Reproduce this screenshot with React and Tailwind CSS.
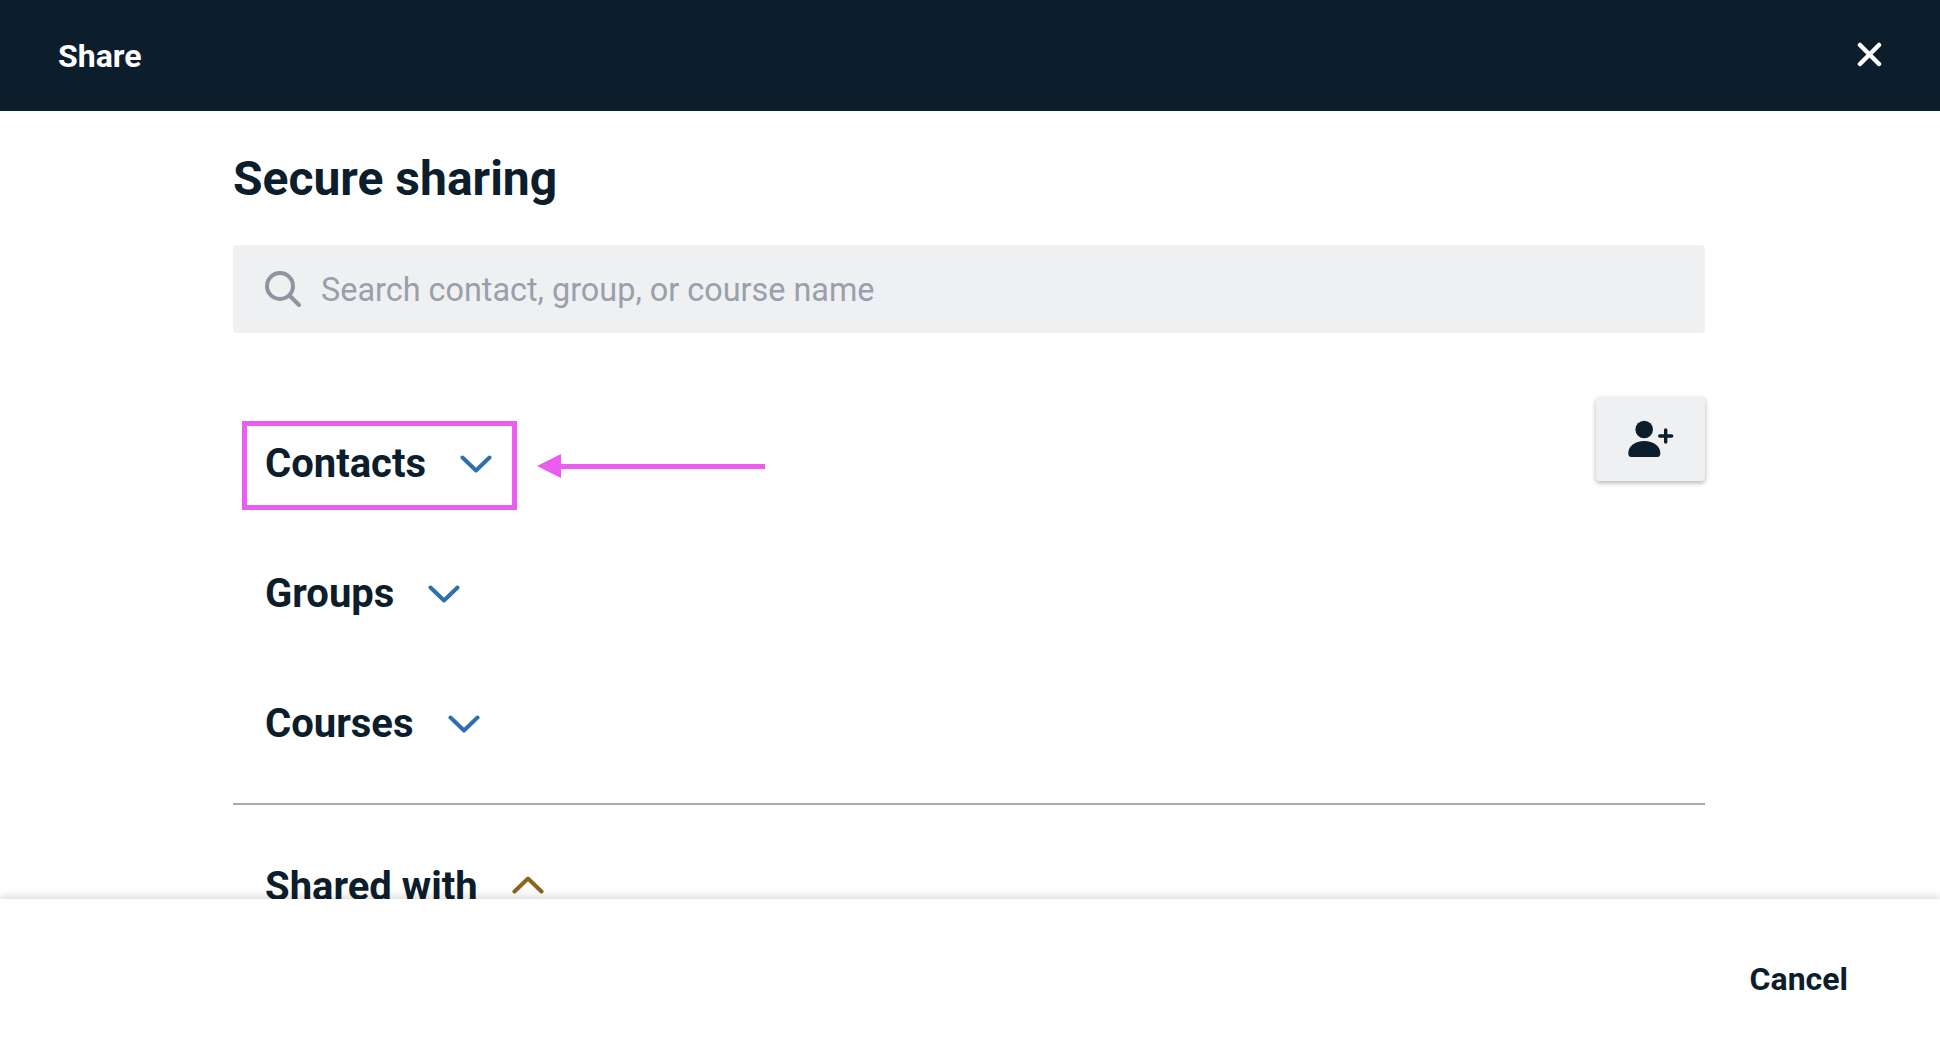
const Chevron = ({ up, className }) => (
  <svg width="32" height="18" viewBox="0 0 32 18" fill="none" stroke="currentColor" strokeWidth="4" strokeLinecap="round" strokeLinejoin="round" className={className}>
    <path d={up ? "M2.5 15.5 L16 2.5 L29.5 15.5" : "M2.5 2.5 L16 15.5 L29.5 2.5"} />
  </svg>
);

const Row = ({ label, up, color = "text-[#2f6fad]", chevronClass = "" }) => (
  <div className="flex h-[130px] items-center gap-[34px] pl-[32px]">
    <span className="text-[40px] font-bold leading-none text-[#0c1d2c]">{label}</span>
    <Chevron up={up} className={`${color} ${chevronClass}`} />
  </div>
);

export default function App() {
  return (
    <div className="flex h-[1054px] w-full flex-col overflow-hidden bg-white font-['Roboto',sans-serif] text-[#0c1d2c]">
      <header className="flex h-[111px] shrink-0 items-center justify-between bg-[#0c1d2c] px-[58px]">
        <span className="text-[32px] font-bold text-white">Share</span>
        <svg className="-mt-[2px]" width="25" height="25" viewBox="0 0 25 25" fill="none" stroke="white" strokeWidth="4.5" strokeLinecap="round">
          <path d="M3 3 L22 22 M22 3 L3 22" />
        </svg>
      </header>

      <main className="relative min-h-0 flex-1 overflow-hidden">
        <div className="ml-[233px] w-[1472px]">
          <h1 className="pt-[38px] text-[48px] font-bold leading-[60px]">Secure sharing</h1>

          <div className="mt-[36px] flex h-[88px] items-center rounded-[4px] bg-[#eff0f2] pl-[32px]">
            <svg width="36" height="36" viewBox="0 0 36 36" fill="none" stroke="#8f94a0" strokeWidth="4" strokeLinecap="round">
              <circle cx="15" cy="15" r="13" />
              <path d="M25 25 L34 34" />
            </svg>
            <span className="ml-[20px] pt-[2px] text-[32.4px] text-[#9a9fac]">Search contact, group, or course name</span>
          </div>

          <div className="mt-[64px] flex items-start justify-between">
            <div className="relative pt-[2px]">
              <Row label="Contacts" />
              <Row label="Groups" />
              <Row label="Courses" />
              <div className="absolute left-[9px] top-[24px] h-[89px] w-[275px] border-[5px] border-[#ec5cf0]" />
              <svg className="absolute left-[304px] top-[57px]" width="228" height="24" viewBox="0 0 228 24" fill="#ec5cf0">
                <path d="M0 12 L24 0 L24 10 L228 10 L228 15 L24 15 L24 24 Z" />
              </svg>
            </div>
            <button className="flex h-[84px] w-[109px] items-center justify-center rounded-[4px] bg-[#eff0f2] shadow-[0_2px_5px_rgba(0,0,0,0.3)]">
              <svg width="46" height="38" viewBox="0 0 46 38" fill="#0c1d2c">
                <circle cx="16.2" cy="9.5" r="8.8" />
                <path d="M0.3 33 C0.3 26 7 21 16.2 21 C25.4 21 32.3 26 32.3 33 C32.3 36 31.3 37 29.3 37 L3.3 37 C1.3 37 0.3 36 0.3 33 Z" />
                <path d="M31.7 16 H43.7 M37.7 10 V22" fill="none" stroke="#0c1d2c" strokeWidth="3.4" strokeLinecap="round" />
              </svg>
            </button>
          </div>

          <div className="mt-[14px] h-[2px] bg-[#a5a9b2]" />

          <div className="mt-[17px]">
            <Row label="Shared with" up color="text-[#8a6420]" chevronClass="-mt-[4px]" />
          </div>
        </div>
      </main>

      <footer className="relative z-10 flex h-[155px] shrink-0 items-center justify-end bg-white pr-[92px] pt-[5px] shadow-[0_-3px_8px_rgba(0,0,0,0.14)]">
        <span className="text-[32px] font-bold text-[#0c1d2c]">Cancel</span>
      </footer>
    </div>
  );
}
